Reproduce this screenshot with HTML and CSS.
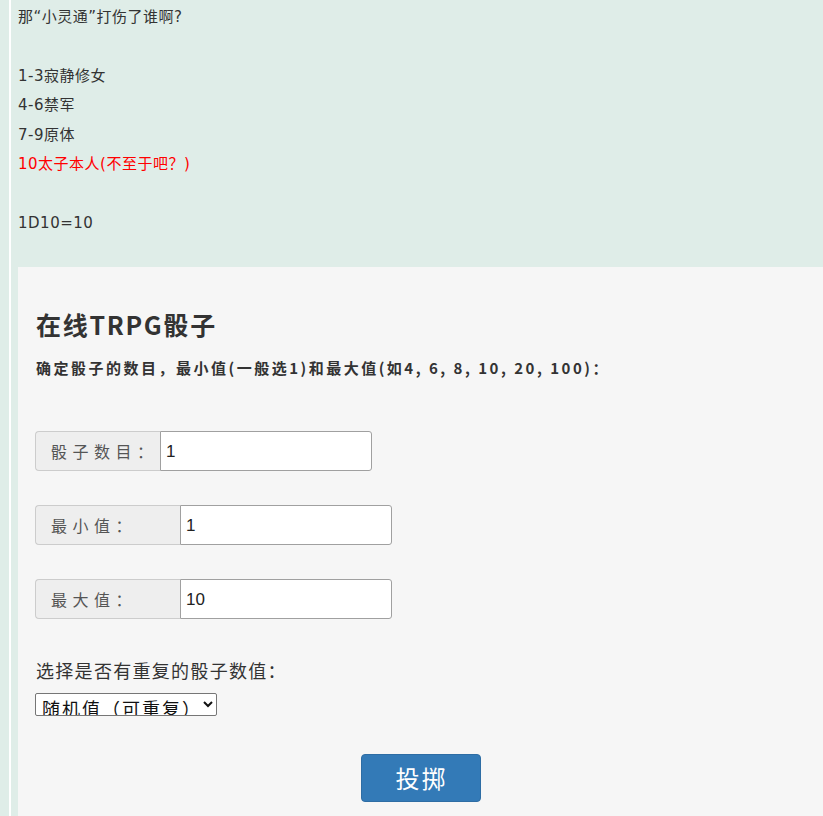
FILE: index.html
```html
<!DOCTYPE html>
<html lang="zh">
<head>
<meta charset="utf-8">
<title>在线TRPG骰子</title>
<link rel="stylesheet" href="styles.css">
</head>
<body>
<div class="wrap">
  <div class="post">
    <p class="line">那“小灵通”打伤了谁啊?</p>
    <p class="line">&nbsp;</p>
    <p class="line">1-3寂静修女</p>
    <p class="line">4-6禁军</p>
    <p class="line">7-9原体</p>
    <p class="line red">10太子本人(不至于吧？)</p>
    <p class="line">&nbsp;</p>
    <p class="line">1D10=10</p>
  </div>
  <div class="panel">
    <h2 class="title">在线TRPG骰子</h2>
    <p class="desc">确定骰子的数目，最小值(一般选1)和最大值(如4, 6, 8, 10, 20, 100)：</p>
    <div class="group">
      <span class="addon w125">骰子数目：</span>
      <input class="field" type="text" value="1">
    </div>
    <div class="group">
      <span class="addon w145">最小值：</span>
      <input class="field" type="text" value="1">
    </div>
    <div class="group">
      <span class="addon w145">最大值：</span>
      <input class="field" type="text" value="10">
    </div>
    <p class="choose">选择是否有重复的骰子数值：</p>
    <select class="sel">
      <option>随机值（可重复）</option>
      <option>不重复</option>
    </select>
    <div class="actions">
      <button class="btn" type="button">投掷</button>
    </div>
  </div>
</div>
</body>
</html>
```

FILE: styles.css
```css
html, body {
  margin: 0;
  padding: 0;
  background: #dfede8;
  height: 100%;
  overflow: hidden;
}
.wrap {
  margin-left: 9px;
  border-left: 2px solid #ffffff;
  padding-left: 7px;
  min-height: 816px;
}
.post {
  padding-top: 3px;
  font-family: "DejaVu Sans", "Noto Sans CJK SC", sans-serif;
  font-size: 15px;
  letter-spacing: 0.5px;
  color: #333333;
}
.line {
  margin: 0;
  line-height: 29.4px;
  height: 29.4px;
}
.red { color: #ff0000; }
.panel {
  margin-top: 29px;
  background: #f6f6f6;
  padding: 43px 17px 40px 17px;
  font-family: "Noto Sans CJK SC", sans-serif;
  color: #333333;
}
.title {
  margin: 0 0 0 1px;
  font-size: 25px;
  line-height: 28px;
  font-weight: 700;
  letter-spacing: 1.7px;
  color: #333333;
}
.desc {
  margin: 19px 0 0 1px;
  font-size: 15px;
  line-height: 22px;
  font-weight: 700;
  color: #333333;
  letter-spacing: 2.5px;
}
.group {
  display: flex;
  height: 40px;
  margin-top: 34px;
}
.group:first-of-type { margin-top: 52px; }
.addon {
  box-sizing: border-box;
  display: flex;
  align-items: center;
  flex-shrink: 0;
  white-space: nowrap;
  overflow: hidden;
  padding-left: 15px;
  background: #eeeeee;
  border: 1px solid #cccccc;
  border-right: 0;
  border-radius: 4px 0 0 4px;
  font-size: 16px;
  letter-spacing: 5.5px;
  color: #555555;
}
.w125 { width: 125px; }
.w145 { width: 145px; }
.field {
  box-sizing: border-box;
  width: 212px;
  height: 40px;
  margin: 0;
  padding: 2px 5px 0 5px;
  border: 1px solid #a0a0a0;
  border-radius: 0 3px 3px 0;
  background: #ffffff;
  font-family: "Liberation Sans", Arial, sans-serif;
  font-size: 17px;
  color: #222222;
  outline: none;
}
.choose {
  margin: 38px 0 0 1px;
  font-size: 18px;
  line-height: 26px;
  letter-spacing: 1.3px;
  color: #333333;
}
.sel {
  display: block;
  margin-top: 10px;
  box-sizing: border-box;
  width: 182px;
  height: 23px;
  padding: 0 0 0 2px;
  font-family: "Noto Sans CJK SC", sans-serif;
  font-size: 18px;
  line-height: 20px;
  letter-spacing: 2px;
  color: #111111;
  background: #ffffff;
  border: 1px solid #767676;
  border-radius: 2px;
}
.actions {
  display: flex;
  justify-content: center;
  margin-top: 38px;
}
.btn {
  width: 120px;
  height: 48px;
  border: 1px solid #2e6da4;
  border-radius: 4px;
  background: #337ab7;
  color: #ffffff;
  font-family: "Noto Sans CJK SC", sans-serif;
  font-size: 24px;
  letter-spacing: 2px;
  text-indent: 2px;
  line-height: 1;
  padding: 0;
}
```
